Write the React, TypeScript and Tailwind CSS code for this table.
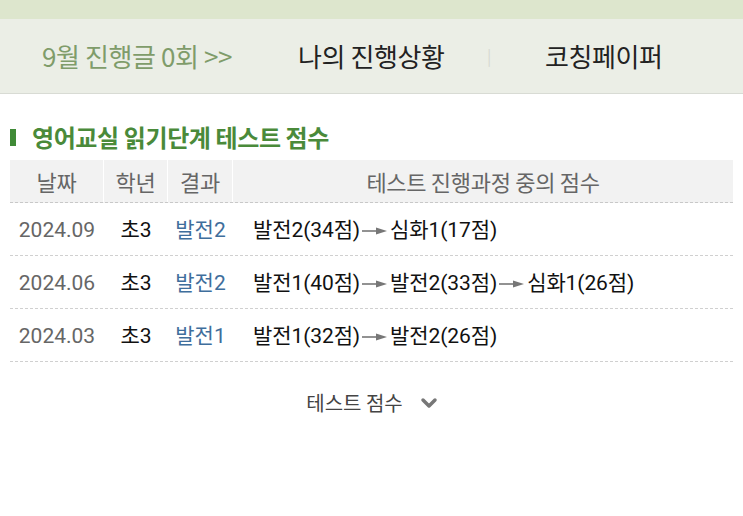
import { ChevronDown } from "lucide-react";

const rows = [
  { date: "2024.09", grade: "초3", result: "발전2", steps: ["발전2(34점)", "심화1(17점)"] },
  { date: "2024.06", grade: "초3", result: "발전2", steps: ["발전1(40점)", "발전2(33점)", "심화1(26점)"] },
  { date: "2024.03", grade: "초3", result: "발전1", steps: ["발전1(32점)", "발전2(26점)"] },
];

function Arrow() {
  return (
    <svg width="26" height="10" viewBox="0 0 26 10" className="mx-[2px] shrink-0">
      <line x1="0" y1="5" x2="16" y2="5" stroke="#777" strokeWidth="1.6" />
      <polygon points="14,1.5 25,5 14,8.5" fill="#777" />
    </svg>
  );
}

export default function App() {
  return (
    <div
      className="w-[743px] h-[516px] bg-white overflow-hidden"
      style={{ fontFamily: "'Noto Sans CJK KR', 'Noto Sans', sans-serif" }}
    >
      <div className="h-[19px] bg-[#dde6cd]" />
      <div className="h-[75px] bg-[#ebeee6] border-b border-[#d8dbd4] flex items-center text-[26px] tracking-[-0.4px] pb-[2px]">
        <div className="w-[298px] pl-[42px] text-[#7f9c6a]">9월 진행글 0회 &gt;&gt;</div>
        <div className="w-[189px] text-[#222]">나의 진행상황</div>
        <div className="w-[58px] text-[#d6d9d2] text-[16px]">|</div>
        <div className="text-[#222]">코칭페이퍼</div>
      </div>

      <div className="mt-[31px] flex items-center px-[10px]">
        <div className="w-[6px] h-[17px] bg-[#3f8a36]" />
        <h2 className="ml-[16px] text-[24px] font-bold text-[#4a8a3a] tracking-[-0.4px] leading-[24px]">
          영어교실 읽기단계 테스트 점수
        </h2>
      </div>

      <div className="mx-[10px] mt-[11px] w-[723px]">
        <div className="flex h-[43px] bg-[#f2f2f2] text-[22px] text-[#666] border-b border-dashed border-[#c8c8c8] tracking-[-0.3px]">
          <div className="w-[94px] flex items-center justify-center border-r border-white">날짜</div>
          <div className="w-[64px] flex items-center justify-center border-r border-white">학년</div>
          <div className="w-[65px] flex items-center justify-center border-r border-white">결과</div>
          <div className="flex-1 flex items-center justify-center">테스트 진행과정 중의 점수</div>
        </div>
        {rows.map((r, i) => (
          <div
            key={i}
            className="flex h-[53px] items-center text-[21px] border-b border-dashed border-[#d0d0d0] pt-[3px]"
            style={{ fontFamily: "Roboto, 'Noto Sans CJK KR', sans-serif" }}
          >
            <div className="w-[94px] text-center text-[#666]">{r.date}</div>
            <div className="w-[64px] text-center text-[#111]">{r.grade}</div>
            <div className="w-[65px] text-center text-[#3f6e9c]">{r.result}</div>
            <div className="flex-1 flex items-center pl-[20px] text-[#111] tracking-[-0.1px]">
              {r.steps.map((s, j) => (
                <span key={j} className="flex items-center">
                  {j > 0 && <Arrow />}
                  {s}
                </span>
              ))}
            </div>
          </div>
        ))}
      </div>

      <div className="mt-[26px] flex items-center justify-center text-[20px] text-[#444]">
        <span className="ml-[4px]">테스트 점수</span>
        <ChevronDown className="ml-[14px] text-[#777]" size={24} strokeWidth={3.5} />
      </div>
    </div>
  );
}
